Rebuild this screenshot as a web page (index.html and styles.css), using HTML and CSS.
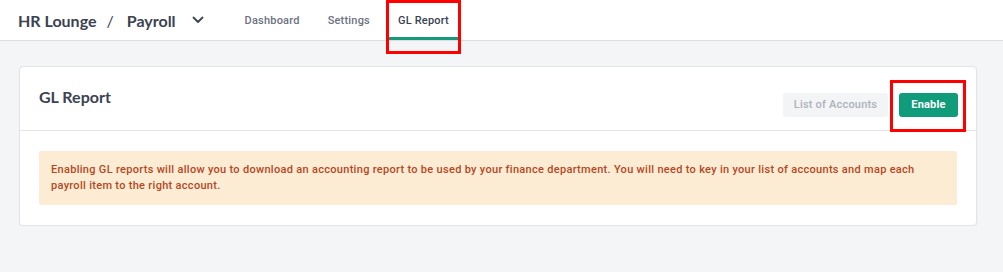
FILE: index.html
```html
<!DOCTYPE html>
<html lang="en">
<head>
    <meta charset="UTF-8">
    <meta name="viewport" content="width=device-width, initial-scale=1.0">
    <title>HR Lounge - Payroll - GL Report</title>
    <link rel="stylesheet" href="styles.css">
</head>
<body>
    <header class="topbar">
        <div class="brand">
            <span class="brand-org">HR Lounge</span>
            <span class="brand-sep">/</span>
            <span class="brand-module">Payroll</span>
            <svg class="brand-chevron" width="12" height="8" viewBox="0 0 12 8">
                <path d="M1.5 1.5 L6 6 L10.5 1.5" fill="none" stroke="#3b4252" stroke-width="1.8" stroke-linecap="round" stroke-linejoin="round"/>
            </svg>
        </div>
        <nav class="tabs">
            <a class="tab">Dashboard</a>
            <a class="tab">Settings</a>
            <a class="tab active">GL Report<span class="highlight tab-highlight"></span></a>
        </nav>
    </header>

    <main class="card">
        <div class="card-header">
            <h1 class="card-title">GL Report</h1>
            <div class="actions">
                <button class="btn btn-muted">List of Accounts</button>
                <button class="btn btn-primary">Enable<span class="highlight btn-highlight"></span></button>
            </div>
        </div>
        <div class="card-body">
            <div class="alert">
                Enabling GL reports will allow you to download an accounting report to be used by your finance department. You will need to key in your list of accounts and map each payroll item to the right account.
            </div>
        </div>
    </main>
</body>
</html>
```

FILE: styles.css
```css
* {
    margin: 0;
    padding: 0;
    box-sizing: border-box;
}

body {
    font-family: Roboto, "Liberation Sans", sans-serif;
    background: #f4f5f7;
    color: #374151;
}

.topbar {
    display: flex;
    align-items: center;
    height: 41px;
    background: #fff;
    border-bottom: 1px solid #dcdde0;
    padding-left: 18px;
}

.brand {
    display: flex;
    align-items: center;
    font-family: Lato, "Liberation Sans", sans-serif;
    font-weight: 700;
    font-size: 16px;
    color: #3b4252;
}

.brand-sep {
    margin: 0 13px 0 10px;
    font-weight: 400;
}

.brand-chevron {
    margin-left: 16px;
}

.tabs {
    display: flex;
    align-self: stretch;
    margin-left: 31px;
    gap: 8px;
}

.tab {
    position: relative;
    display: flex;
    align-items: center;
    padding: 3px 10px 0;
    font-size: 11px;
    font-weight: 500;
    letter-spacing: 0.2px;
    color: #6b7280;
    border-bottom: 3px solid transparent;
}

.tab.active {
    color: #374151;
    border-bottom-color: #16997a;
}

.highlight {
    position: absolute;
    border: 3px solid #ff0000;
    pointer-events: none;
}

.tab-highlight {
    left: -2px;
    right: -2px;
    top: 0;
    bottom: -17px;
}

.card {
    margin: 25px 26px 0 19px;
    background: #fff;
    border: 1px solid #e3e4e7;
    border-radius: 4px;
    box-shadow: 0 1px 2px rgba(0, 0, 0, 0.06);
}

.card-header {
    display: flex;
    justify-content: space-between;
    align-items: center;
    height: 64px;
    padding: 0 18px 0 19px;
    border-bottom: 1px solid #e3e4e7;
}

.card-title {
    font-family: Lato, "Liberation Sans", sans-serif;
    font-size: 16px;
    font-weight: 700;
    color: #3b4252;
    margin-top: -4px;
}

.actions {
    display: flex;
    gap: 11px;
    margin-top: 12px;
}

.btn {
    position: relative;
    height: 24px;
    border: none;
    border-radius: 3px;
    font-family: Roboto, "Liberation Sans", sans-serif;
    font-size: 11px;
    font-weight: 500;
    letter-spacing: 0.2px;
}

.btn-muted {
    width: 105px;
    background: #f3f4f6;
    color: #adb2ba;
}

.btn-primary {
    width: 59px;
    background: #109c7b;
    color: #fff;
    font-weight: 700;
}

.btn-highlight {
    left: -9px;
    right: -8px;
    top: -13px;
    bottom: -15px;
}

.card-body {
    padding: 20px 19px 20px 19px;
}

.alert {
    background: #fdecd4;
    color: #b4481e;
    font-size: 11px;
    font-weight: 500;
    letter-spacing: 0.3px;
    line-height: 16px;
    padding: 11px 40px 11px 12px;
    border-radius: 2px;
}
```
